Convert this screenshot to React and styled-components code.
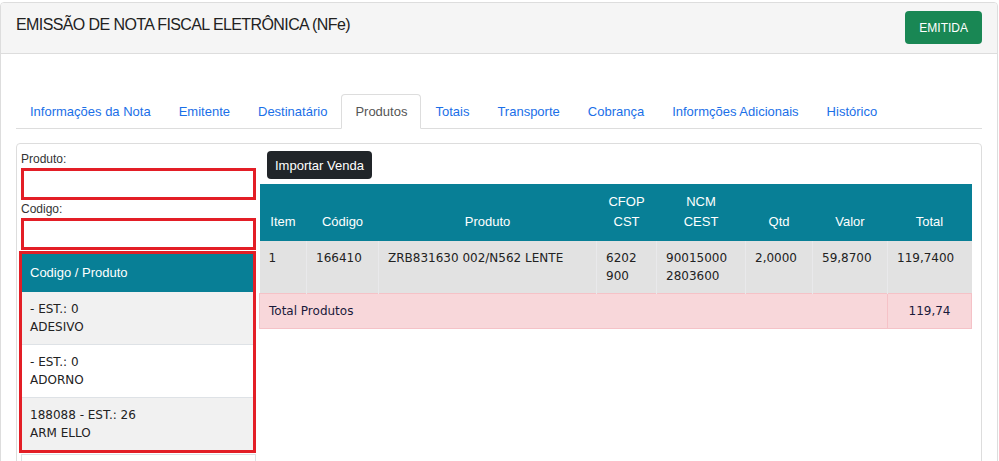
import React from "react";
import styled, { createGlobalStyle } from "styled-components";

const GlobalStyle = createGlobalStyle`
  body {
    margin: 0;
    background: #ffffff;
    font-family: "Liberation Sans", Arial, sans-serif;
    color: #333333;
  }
`;

const tabs = [
  "Informações da Nota",
  "Emitente",
  "Destinatário",
  "Produtos",
  "Totais",
  "Transporte",
  "Cobrança",
  "Informções Adicionais",
  "Histórico",
];

const produtos = [
  { codigo: "", est: "0", nome: "ADESIVO" },
  { codigo: "", est: "0", nome: "ADORNO" },
  { codigo: "188088", est: "26", nome: "ARM ELLO" },
];

const App = () => {
  return (
    <>
      <GlobalStyle />
      <Card>
        <CardHeader>
          <Title>EMISSÃO DE NOTA FISCAL ELETRÔNICA (NFe)</Title>
          <StatusButton>EMITIDA</StatusButton>
        </CardHeader>
        <CardBody>
          <Tabs>
            {tabs.map((t) => (
              <Tab key={t} $active={t === "Produtos"}>
                {t}
              </Tab>
            ))}
          </Tabs>
          <Panel>
            <SideColumn>
              <Label>Produto:</Label>
              <Input />
              <Label>Codigo:</Label>
              <Input />
              <List>
                <ListHeader>Codigo / Produto</ListHeader>
                {produtos.map((p, i) => (
                  <ListRow key={p.nome} $odd={i % 2 === 0}>
                    {p.codigo ? p.codigo + " " : ""}- EST.: {p.est}
                    <br />
                    {p.nome}
                  </ListRow>
                ))}
              </List>
              <ListMore />
            </SideColumn>
            <MainColumn>
              <DarkButton>Importar Venda</DarkButton>
              <Table>
                <colgroup>
                  <col style={{ width: 47 }} />
                  <col style={{ width: 72 }} />
                  <col style={{ width: 218 }} />
                  <col style={{ width: 60 }} />
                  <col style={{ width: 89 }} />
                  <col style={{ width: 67 }} />
                  <col style={{ width: 75 }} />
                  <col style={{ width: 84 }} />
                </colgroup>
                <thead>
                  <tr>
                    <Th>Item</Th>
                    <Th>Código</Th>
                    <Th>Produto</Th>
                    <Th>
                      CFOP
                      <br />
                      CST
                    </Th>
                    <Th>
                      NCM
                      <br />
                      CEST
                    </Th>
                    <Th>Qtd</Th>
                    <Th>Valor</Th>
                    <Th>Total</Th>
                  </tr>
                </thead>
                <tbody>
                  <tr>
                    <Td>1</Td>
                    <Td>166410</Td>
                    <Td>ZRB831630 002/N562 LENTE</Td>
                    <Td>
                      6202
                      <br />
                      900
                    </Td>
                    <Td>
                      90015000
                      <br />
                      2803600
                    </Td>
                    <Td>2,0000</Td>
                    <Td>59,8700</Td>
                    <Td>119,7400</Td>
                  </tr>
                </tbody>
                <tfoot>
                  <tr>
                    <FootCell colSpan={7}>Total Produtos</FootCell>
                    <FootCell $center>119,74</FootCell>
                  </tr>
                </tfoot>
              </Table>
            </MainColumn>
          </Panel>
        </CardBody>
      </Card>
    </>
  );
};

const Card = styled.div`
  box-sizing: border-box;
  width: 998px;
  margin-top: 2px;
  border: 1px solid #dddddd;
  border-radius: 4px;
  overflow: hidden;
`;

const CardHeader = styled.div`
  box-sizing: border-box;
  height: 51px;
  background: #f5f5f5;
  border-bottom: 1px solid #dddddd;
  display: flex;
  justify-content: space-between;
  align-items: flex-start;
  padding: 0 15px 0 15px;
`;

const Title = styled.h1`
  margin: 12px 0 0;
  font-size: 16px;
  font-weight: normal;
  letter-spacing: -0.6px;
  color: #222222;
  line-height: 20px;
`;

const StatusButton = styled.button`
  margin-top: 8px;
  height: 33px;
  padding: 0 14px;
  border: none;
  border-radius: 4px;
  background: #198754;
  color: #ffffff;
  font-family: "Liberation Sans", Arial, sans-serif;
  font-size: 12px;
`;

const CardBody = styled.div`
  padding: 40px 15px 0;
`;

const Tabs = styled.ul`
  display: flex;
  margin: 0;
  padding: 0;
  list-style: none;
  border-bottom: 1px solid #dddddd;
`;

const Tab = styled.li`
  box-sizing: border-box;
  height: 35px;
  line-height: 33px;
  padding: 0 13px;
  font-size: 13px;
  color: ${(p) => (p.$active ? "#555555" : "#1a6fe8")};
  border: 1px solid ${(p) => (p.$active ? "#dddddd" : "transparent")};
  border-bottom-color: ${(p) => (p.$active ? "#ffffff" : "transparent")};
  border-radius: 4px 4px 0 0;
  background: ${(p) => (p.$active ? "#ffffff" : "transparent")};
  margin-bottom: -1px;
`;

const Panel = styled.div`
  display: flex;
  gap: 3px;
  margin-top: 14px;
  height: 340px;
  padding: 6px 9px 0 4px;
  border: 1px solid #dddddd;
  border-radius: 4px;
`;

const SideColumn = styled.div`
  width: 236px;
  display: flex;
  flex-direction: column;
`;

const Label = styled.label`
  font-size: 12px;
  line-height: 18px;
  color: #333333;
`;

const Input = styled.input`
  box-sizing: border-box;
  width: 100%;
  height: 32px;
  border: 3px solid #e31e26;
  outline: none;
`;

const List = styled.div`
  margin: 1px 0 0 -2px;
  border: 3px solid #e31e26;
`;

const ListHeader = styled.div`
  height: 38px;
  line-height: 38px;
  padding: 0 8px;
  background: #087f96;
  color: #ffffff;
  font-size: 13px;
`;

const ListRow = styled.div`
  padding: 8px 8px;
  min-height: 36px;
  font-family: "DejaVu Sans", Verdana, sans-serif;
  font-size: 12px;
  line-height: 18px;
  color: #222222;
  background: ${(p) => (p.$odd ? "#f1f1f1" : "#ffffff")};
  border-top: 1px solid #dee2e6;
  &:nth-child(2) {
    border-top: none;
  }
`;

const ListMore = styled.div`
  margin-top: 1px;
  flex: 1;
  border: 1px solid #dee2e6;
  border-bottom: none;
`;

const MainColumn = styled.div`
  flex: 1;
  display: flex;
  flex-direction: column;
  align-items: flex-start;
`;

const DarkButton = styled.button`
  margin: 1px 0 0 8px;
  height: 28px;
  padding: 0 8px;
  border: none;
  border-radius: 4px;
  background: #212529;
  color: #ffffff;
  font-family: "Liberation Sans", Arial, sans-serif;
  font-size: 13px;
`;

const Table = styled.table`
  margin-top: 5px;
  width: 712px;
  table-layout: fixed;
  border-collapse: collapse;
`;

const Th = styled.th`
  padding: 8px 4px 9px;
  background: #087f96;
  color: #ffffff;
  font-size: 13px;
  font-weight: normal;
  line-height: 20px;
  text-align: center;
  vertical-align: bottom;
`;

const Td = styled.td`
  padding: 8px 8px 8px 9px;
  height: 36px;
  background: #e2e2e2;
  border-left: 1px solid #e9e9eb;
  font-family: "DejaVu Sans", Verdana, sans-serif;
  font-size: 12px;
  line-height: 18px;
  color: #222222;
  vertical-align: top;
  white-space: nowrap;
  &:first-child {
    border-left: none;
  }
`;

const FootCell = styled.td`
  padding: 8px 9px;
  background: #f8d7da;
  border: 1px solid #f5c2c7;
  font-family: "DejaVu Sans", Verdana, sans-serif;
  font-size: 12px;
  line-height: 18px;
  color: #1a1a3a;
  text-align: ${(p) => (p.$center ? "center" : "left")};
`;

export default App;
